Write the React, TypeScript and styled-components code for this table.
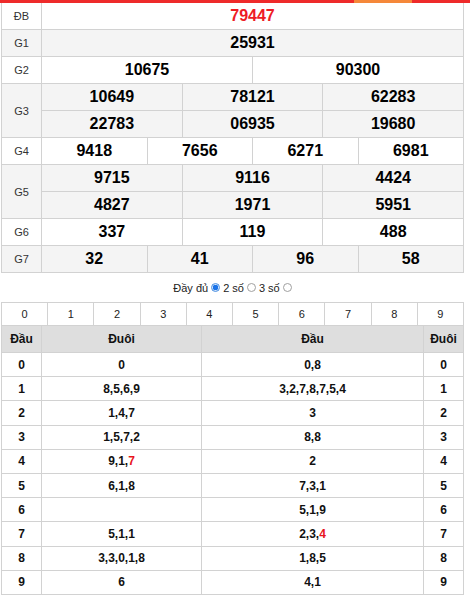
import React from "react";
import styled, { createGlobalStyle } from "styled-components";

const GlobalStyle = createGlobalStyle`
  html, body { margin: 0; padding: 0; background: #fff; }
  body { font-family: "Liberation Sans", Arial, sans-serif; color: #000; }
  * { box-sizing: border-box; }
`;

const Page = styled.div`
  width: 470px;
`;

const TopBar = styled.div`
  display: flex;
  height: 3px;
`;

const BarSeg = styled.div<{ $color: string; $w?: number }>`
  background: ${(p) => p.$color};
  ${(p) => (p.$w ? `width: ${p.$w}px;` : "flex: 1;")}
`;

const Grid = styled.div<{ $top?: boolean }>`
  margin-left: 1px;
  width: 463px;
  border-left: 1px solid #d2d2d2;
  ${(p) => (p.$top ? "border-top: 1px solid #d2d2d2;" : "")}
`;

const PrizeRow = styled.div<{ $alt?: boolean }>`
  display: flex;
  background: ${(p) => (p.$alt ? "#f4f4f4" : "#fff")};
`;

const Label = styled.div`
  width: 40px;
  flex: none;
  display: flex;
  align-items: center;
  justify-content: center;
  font-size: 11px;
  color: #333;
  border-right: 1px solid #d2d2d2;
  border-bottom: 1px solid #d2d2d2;
`;

const Values = styled.div`
  flex: 1;
  display: flex;
  flex-direction: column;
`;

const SubRow = styled.div`
  display: flex;
`;

const Num = styled.div<{ $red?: boolean }>`
  flex: 1;
  height: 27px;
  display: flex;
  align-items: center;
  justify-content: center;
  font-size: 16px;
  font-weight: bold;
  color: ${(p) => (p.$red ? "#ee1c25" : "#000")};
  border-right: 1px solid #d2d2d2;
  border-bottom: 1px solid #d2d2d2;
`;

const Options = styled.div`
  height: 29px;
  display: flex;
  align-items: center;
  justify-content: center;
  font-size: 11px;
  color: #222;
  padding-right: 2px;
`;

const Radio = styled.span<{ $checked?: boolean }>`
  display: inline-block;
  width: 9px;
  height: 9px;
  border-radius: 50%;
  margin: 0 3px 0 3px;
  border: 1px solid ${(p) => (p.$checked ? "#4a90e2" : "#a0a0a0")};
  background: ${(p) =>
    p.$checked
      ? "radial-gradient(circle, #1a73e8 0 2.6px, #cfe2fa 3px)"
      : "#fff"};
`;

const DigitRow = styled.div`
  display: flex;
`;

const DigitCell = styled.div`
  flex: 1;
  height: 23px;
  display: flex;
  align-items: center;
  justify-content: center;
  font-size: 11px;
  color: #222;
  border-right: 1px solid #d2d2d2;
  border-bottom: 1px solid #d2d2d2;
`;

const LotoRow = styled.div<{ $head?: boolean }>`
  display: flex;
  height: ${(p) => (p.$head ? "27px" : "24.2px")};
  background: ${(p) => (p.$head ? "#dedede" : "#fff")};
`;

const LotoCell = styled.div<{ $w: number }>`
  width: ${(p) => p.$w}px;
  flex: none;
  display: flex;
  align-items: center;
  justify-content: center;
  font-size: 12px;
  font-weight: bold;
  color: #111;
  border-right: 1px solid #d2d2d2;
  border-bottom: 1px solid #d2d2d2;
`;

const Red = styled.span`
  color: #e8141c;
`;

type Prize = { label: string; rows: string[][]; red?: boolean };

const prizes: Prize[] = [
  { label: "ĐB", rows: [["79447"]], red: true },
  { label: "G1", rows: [["25931"]] },
  { label: "G2", rows: [["10675", "90300"]] },
  { label: "G3", rows: [["10649", "78121", "62283"], ["22783", "06935", "19680"]] },
  { label: "G4", rows: [["9418", "7656", "6271", "6981"]] },
  { label: "G5", rows: [["9715", "9116", "4424"], ["4827", "1971", "5951"]] },
  { label: "G6", rows: [["337", "119", "488"]] },
  { label: "G7", rows: [["32", "41", "96", "58"]] },
];

type Loto = { d: string; tail: React.ReactNode; head: React.ReactNode };

const loto: Loto[] = [
  { d: "0", tail: "0", head: "0,8" },
  { d: "1", tail: "8,5,6,9", head: "3,2,7,8,7,5,4" },
  { d: "2", tail: "1,4,7", head: "3" },
  { d: "3", tail: "1,5,7,2", head: "8,8" },
  { d: "4", tail: <>9,1,<Red>7</Red></>, head: "2" },
  { d: "5", tail: "6,1,8", head: "7,3,1" },
  { d: "6", tail: "", head: "5,1,9" },
  { d: "7", tail: "5,1,1", head: <>2,3,<Red>4</Red></> },
  { d: "8", tail: "3,3,0,1,8", head: "1,8,5" },
  { d: "9", tail: "6", head: "4,1" },
];

export default function App() {
  return (
    <Page>
      <GlobalStyle />
      <TopBar>
        <BarSeg $color="#ee2a2a" $w={354} />
        <BarSeg $color="#f5883a" $w={58} />
        <BarSeg $color="#ee2a2a" />
      </TopBar>
      <Grid>
        {prizes.map((p, i) => (
          <PrizeRow key={p.label} $alt={i % 2 === 1}>
            <Label>{p.label}</Label>
            <Values>
              {p.rows.map((r, j) => (
                <SubRow key={j}>
                  {r.map((n, k) => (
                    <Num key={k} $red={p.red}>
                      {n}
                    </Num>
                  ))}
                </SubRow>
              ))}
            </Values>
          </PrizeRow>
        ))}
      </Grid>
      <Options>
        Đầy đủ
        <Radio $checked />
        2 số
        <Radio />
        3 số
        <Radio />
      </Options>
      <Grid $top>
        <DigitRow>
          {Array.from({ length: 10 }, (_, i) => (
            <DigitCell key={i}>{i}</DigitCell>
          ))}
        </DigitRow>
        <LotoRow $head>
          <LotoCell $w={40}>Đầu</LotoCell>
          <LotoCell $w={160}>Đuôi</LotoCell>
          <LotoCell $w={222}>Đầu</LotoCell>
          <LotoCell $w={40}>Đuôi</LotoCell>
        </LotoRow>
        {loto.map((r) => (
          <LotoRow key={r.d}>
            <LotoCell $w={40}>{r.d}</LotoCell>
            <LotoCell $w={160}>{r.tail}</LotoCell>
            <LotoCell $w={222}>{r.head}</LotoCell>
            <LotoCell $w={40}>{r.d}</LotoCell>
          </LotoRow>
        ))}
      </Grid>
    </Page>
  );
}
